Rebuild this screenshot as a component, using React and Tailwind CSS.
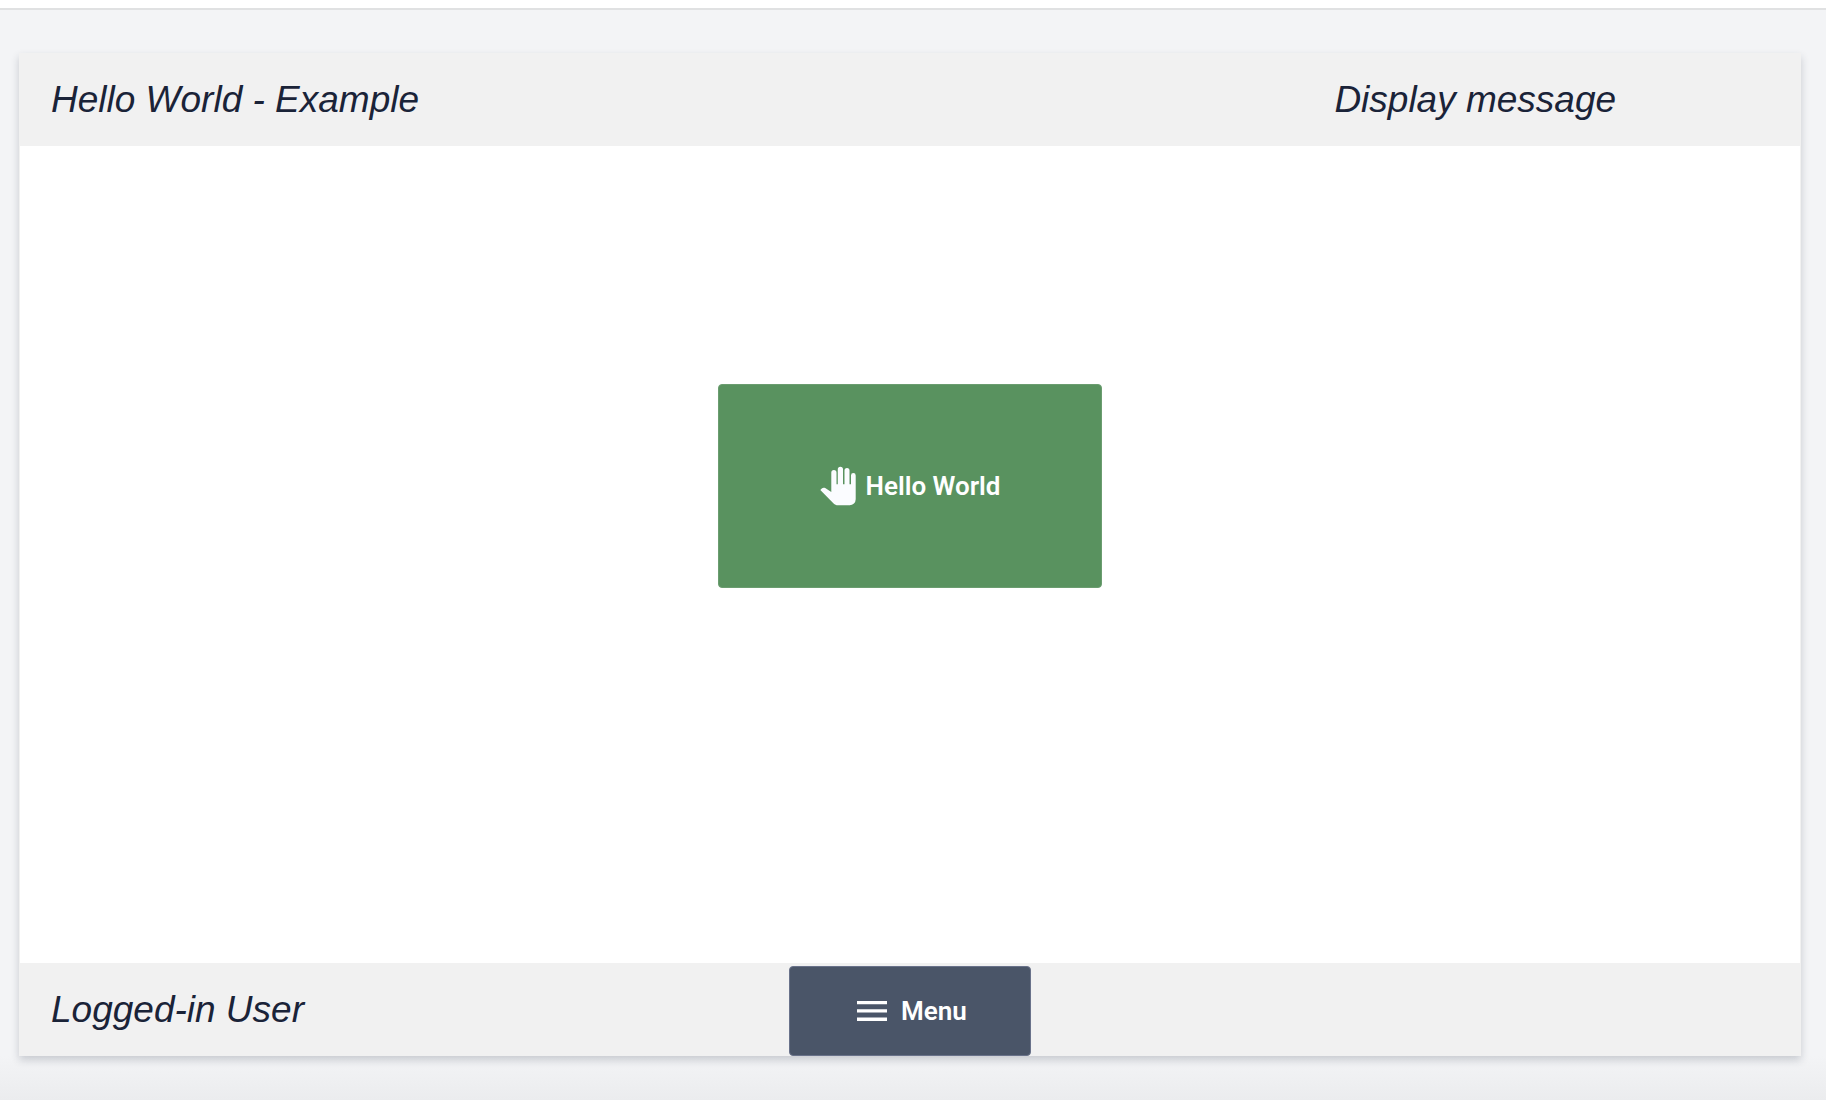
function HandIcon() {
  return (
    <svg viewBox="0 0 36 40" className="h-10 w-9 shrink-0 fill-[#fbfcff]" aria-hidden="true">
      <path d="M11.3 26V6.5a2.6 2.6 0 0 1 5.2 0V18.3h1.3V3.3a2.6 2.6 0 0 1 5.2 0v15h1.5V4.5a2.5 2.5 0 0 1 5 0v13.8h1.5V9.4a2.35 2.35 0 0 1 4.7 0V33.3a6 6 0 0 1-6 6H18c-1.9 0-3.2-.6-4.4-1.8L.3 24l1.2-1.2c1-1 2.3-1.3 3.7-.7z" />
    </svg>
  );
}

function MenuIcon() {
  return (
    <svg viewBox="0 0 30 20" className="h-5 w-[30px] shrink-0 fill-white" aria-hidden="true">
      <path d="M0 0h30v3.3H0zM0 8.3h30v3.3H0zM0 16.6h30V20H0z" />
    </svg>
  );
}

const titleClass = "px-[31px] text-[37px] leading-[44px] italic text-[#1a2338] whitespace-nowrap";

export default function App() {
  return (
    <div className="flex min-h-screen flex-col bg-[#f3f4f6] font-['Liberation_Sans',Arial,sans-serif]">
      <div className="h-2.5 border-b-2 border-[#e0e1e2] bg-white" />
      <section className="relative z-10 mx-[25px] ml-[19px] mt-[43px] flex grow flex-col border-x border-[#f1f1f1] bg-white shadow-[0_4px_8px_rgba(30,41,59,0.2)]">
        <header className="grid h-[93px] grid-cols-[721fr_279fr] items-center bg-[#f1f1f1]">
          <h1 className={titleClass}>Hello World - Example</h1>
          <p className={titleClass}>Display message</p>
        </header>
        <main className="flex grow flex-col items-center pt-[238px]">
          <button
            type="button"
            className="flex h-[204px] w-[384px] items-center justify-center gap-2.5 rounded-[4px] border border-[#6b9d70] bg-[#59925f] font-['Roboto',sans-serif] text-[26px] font-semibold text-white"
          >
            <HandIcon />
            Hello World
          </button>
        </main>
        <footer className="grid h-[93px] grid-cols-[1fr_auto_1fr] items-center bg-[#f1f1f1]">
          <p className={titleClass}>Logged-in User</p>
          <button
            type="button"
            className="flex h-[90px] w-[242px] items-center justify-center gap-3.5 self-end rounded-[4px] border border-[#69728a] bg-[#4a5568] pl-1 font-['Roboto',sans-serif] text-[26px] font-semibold text-white"
          >
            <MenuIcon />
            Menu
          </button>
        </footer>
      </section>
      <div className="h-11 bg-linear-to-b from-[#f3f4f6] to-[#ebecee]" />
    </div>
  );
}
